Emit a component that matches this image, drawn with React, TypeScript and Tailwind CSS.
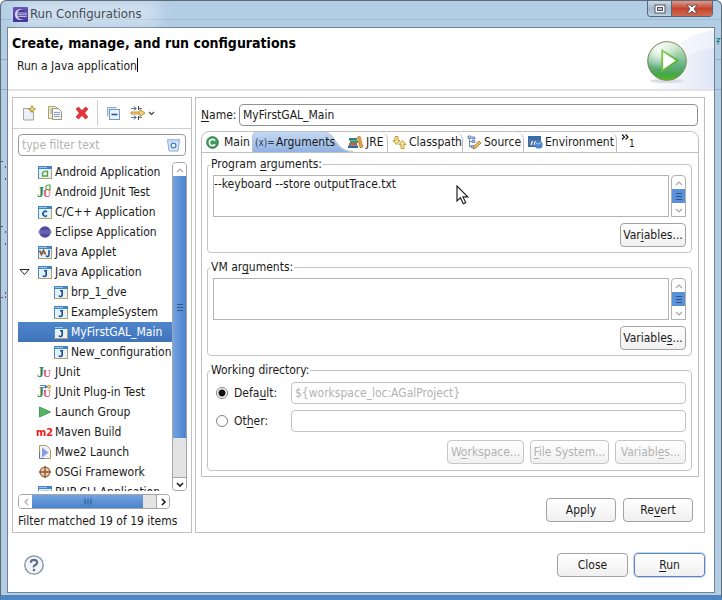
import React from "react";
import { clsx } from "clsx";

const font = "font-['DejaVu_Sans_Condensed','DejaVu_Sans',sans-serif]";

function U({ children }: { children: React.ReactNode }) {
  return <span className="underline underline-offset-2">{children}</span>;
}

/* ---------- icons ---------- */

function EclipseIcon() {
  return (
    <svg width="15" height="15" viewBox="0 0 15 15" aria-hidden="true">
      <defs>
        <linearGradient id="ecl" x1="0" x2="0" y1="0" y2="1">
          <stop offset="0" stopColor="#6a55b5" />
          <stop offset="1" stopColor="#41349a" />
        </linearGradient>
      </defs>
      <rect width="15" height="15" rx="1" fill="url(#ecl)" />
      <circle cx="7.500" cy="7.500" r="5.600" fill="#dcd8ef" />
      <circle cx="9" cy="7.500" r="5" fill="#453b90" />
      <path d="M3 6h11M3 7.800h11M3.600 9.600h10" stroke="#d6d2ef" strokeWidth=".9" />
    </svg>
  );
}

function PlayIcon() {
  return (
    <svg width="42" height="44" viewBox="0 0 42 44" aria-hidden="true">
      <defs>
        <linearGradient id="ball" x1="0" y1="0" x2="0" y2="1">
          <stop offset="0" stopColor="#e8f5e6" />
          <stop offset=".3" stopColor="#a3d3ac" />
          <stop offset=".65" stopColor="#5fae80" />
          <stop offset=".85" stopColor="#47a648" />
          <stop offset="1" stopColor="#4fbf12" />
        </linearGradient>
        <radialGradient id="glow" cx=".3" cy=".22" r=".5">
          <stop offset="0" stopColor="#fff" stopOpacity=".95" />
          <stop offset="1" stopColor="#fff" stopOpacity="0" />
        </radialGradient>
        <linearGradient id="tri" x1="0" y1="0" x2="1" y2="1">
          <stop offset="0" stopColor="#8ccf50" />
          <stop offset="1" stopColor="#4aa82a" />
        </linearGradient>
      </defs>
      <ellipse cx="21" cy="41" rx="17" ry="2" fill="#dcdce6" />
      <circle cx="21" cy="21" r="19.300" fill="url(#ball)" stroke="#7d8a55" strokeWidth="1" />
      <circle cx="21" cy="21" r="18.500" fill="url(#glow)" />
      <path d="M16.200 10.500v20.500L31.500 20.500Z" fill="#fff" stroke="url(#tri)" strokeWidth="1.900" />
    </svg>
  );
}

function NewIcon() {
  return (
    <svg width="16" height="16" viewBox="0 0 16 16" aria-hidden="true">
      <path d="M2.500 3.500h7v3h3v8.500h-10Z" fill="#e9f0fb" stroke="#a3a68c" />
      <path d="M11 .5l1.200 2.500 2.500 1-2.500 1L11 7.500 9.800 5 7.300 4l2.500-1Z" fill="#f3d46c" stroke="#a98a28" strokeWidth=".8" />
    </svg>
  );
}

function CopyIcon() {
  return (
    <svg width="16" height="16" viewBox="0 0 16 16" aria-hidden="true">
      <path d="M1.500 1.500h7l2 2v10h-9Z" fill="#f6efd2" stroke="#b3a160" />
      <path d="M5.500 3.500h6l3 3v8h-9Z" fill="#f2f6fd" stroke="#9d9668" />
      <path d="M7 7.500h6M7 9.500h6M7 11.500h6M3 4h2M3 6h2M3 8h2" stroke="#7f97c4" strokeWidth=".9" />
    </svg>
  );
}

function DeleteIcon() {
  return (
    <svg width="14" height="14" viewBox="0 0 14 14" aria-hidden="true">
      <path d="M1 3l2.500-2L7 4.500 10.500 1 13 3 9.700 7 13 11l-2.500 2L7 9.600 3.500 13 1 11l3.300-4Z" fill="#e5343b" stroke="#c2252c" strokeWidth=".6" />
    </svg>
  );
}

function CollapseIcon() {
  return (
    <svg width="14" height="14" viewBox="0 0 14 14" aria-hidden="true">
      <path d="M1.500 10.500v-9h9" fill="#d9e6f5" stroke="#8fadd0" />
      <rect x="3.500" y="3.500" width="10" height="10" fill="#eaf2fb" stroke="#7399c6" />
      <path d="M5.500 8.500h6" stroke="#1f4f94" strokeWidth="1.400" />
    </svg>
  );
}

function FilterIcon() {
  return (
    <svg width="16" height="16" viewBox="0 0 16 16" aria-hidden="true">
      <path d="M1 3.500h5M9 3.500h3M1 12.500h5M9 12.500h3" stroke="#5d7c94" />
      <path d="M4 1.500l2 2-2 2M4 10.500l2 2-2 2M8.500 1v4M8.500 11v4" fill="none" stroke="#2f4a5e" />
      <path d="M1 7h9V4.500L15 8l-5 3.500V9H1Z" fill="#f6cd7c" stroke="#c08a2c" strokeWidth=".9" />
    </svg>
  );
}

function ClearIcon() {
  return (
    <svg width="13" height="14" viewBox="0 0 13 14" aria-hidden="true">
      <path d="M.5 1.500h12L11 13H2Z" fill="#dbe9f8" stroke="#8aa9cc" />
      <path d="M.5 1.500h12l-.3 2H.8Z" fill="#bcd2ea" />
      <circle cx="6.500" cy="7.500" r="2.400" fill="#fff" stroke="#3f7fd6" strokeWidth="1.300" />
    </svg>
  );
}

function Frame({ children }: { children?: React.ReactNode }) {
  return (
    <svg width="14" height="13" viewBox="0 0 14 13" aria-hidden="true">
      <rect x=".5" y=".5" width="13" height="12" fill="#e6f2fb" stroke="#b3a06a" />
      <path d="M.5 1v11.500" stroke="#4d8ac4" />
      <rect x="0" y="0" width="14" height="3" fill="#3f86c4" />
      <rect x="1" y="1" width="8" height="1" fill="#9cc6ee" />
      {children}
    </svg>
  );
}

function Letter({ x, y, size, fill, children }: { x: number; y: number; size: number; fill: string; children: string }) {
  return (
    <text x={x} y={y} fontSize={size} fontWeight="700" fill={fill} fontFamily="Liberation Serif, serif">{children}</text>
  );
}

function TreeIcon({ kind }: { kind: string }) {
  switch (kind) {
    case "android":
      return (
        <Frame>
          <path d="M4.500 6.500V10h5V4.500M4.500 8c0-2 1-2.800 5-2.800" fill="none" stroke="#5ca03c" strokeWidth="1.300" />
        </Frame>
      );
    case "c":
      return (
        <Frame>
          <path d="M9 6A2.400 2.400 0 1 0 9 9.500" fill="none" stroke="#1d5b9c" strokeWidth="1.700" />
        </Frame>
      );
    case "java":
      return (
        <Frame>
          <path d="M6 4.800h3M8.200 4.500v4q0 2-1.700 2-1.100 0-1.500-1" fill="none" stroke="#1c4d94" strokeWidth="1.600" />
        </Frame>
      );
    case "applet":
      return (
        <Frame>
          <path d="M1.500 4.500l2 4 2-4 2 4" fill="none" stroke="#8a5a2c" strokeWidth="1.700" />
          <path d="M11 4v5q0 1.500-1.300 1.500t-1.500-1" fill="none" stroke="#1c4d94" strokeWidth="1.500" />
        </Frame>
      );
    case "php":
      return (
        <Frame>
          <path d="M3 5.500h8" stroke="#2a5a96" strokeWidth="1.500" />
        </Frame>
      );
    case "eclipse":
      return (
        <svg width="14" height="14" viewBox="0 0 14 14" aria-hidden="true">
          <circle cx="7" cy="7" r="5.800" fill="#55499c" />
          <path d="M.5 6h13M.5 8h13" stroke="#7479c8" strokeWidth="1" />
        </svg>
      );
    case "junit":
    case "junitA":
    case "junitP":
      return (
        <svg width="15" height="16" viewBox="0 0 15 16" aria-hidden="true">
          <Letter x={0} y={13} size={14} fill="#27885a">J</Letter>
          <Letter x={6} y={13} size={11} fill="#dc5361">U</Letter>
          {kind === "junitA" && <path d="M9 5V2.500Q9 .8 13 1v5M9 4v1.500h4" fill="none" stroke="#5ca03c" strokeWidth="1.200" />}
          {kind === "junitP" && (
            <>
              <path d="M3 1.500h5M3 3.500h5" stroke="#5483bd" />
              <path d="M8 .8l3 2-3 2Z" fill="#3d71b5" />
              <circle cx="12" cy="2.800" r="1.700" fill="#f6d478" stroke="#b98b29" strokeWidth=".7" />
            </>
          )}
        </svg>
      );
    case "launch":
      return (
        <svg width="14" height="14" viewBox="0 0 14 14" aria-hidden="true">
          <path d="M1.500 2l11 5L1.500 12Z" fill="#57b368" stroke="#36964b" strokeWidth=".9" />
        </svg>
      );
    case "mwe":
      return (
        <svg width="14" height="14" viewBox="0 0 14 14" aria-hidden="true">
          <path d="M1.500.5h7l4 4v9h-11Z" fill="#eef1fb" stroke="#b69d58" />
          <path d="M1.500 7v6.500h5" fill="none" stroke="#5d76a8" />
          <path d="M4 2.500l6.500 5L4 12.500Z" fill="#8a9de0" />
        </svg>
      );
    case "osgi":
      return (
        <svg width="14" height="14" viewBox="0 0 14 14" aria-hidden="true">
          <circle cx="7" cy="7" r="4.800" fill="#ecd3b8" stroke="#a5704b" strokeWidth="1.400" />
          <path d="M1 7h12M7 1v12" stroke="#875231" strokeWidth="1.300" />
        </svg>
      );
    case "maven":
      return <span className="text-[11px] font-bold leading-none text-[#ee1c1c]">m2</span>;
    default:
      return null;
  }
}

function MainTabIcon() {
  return (
    <svg width="13" height="13" viewBox="0 0 13 13" aria-hidden="true">
      <circle cx="6.500" cy="6.500" r="5.900" fill="#3f9a5b" stroke="#2c7f48" strokeWidth=".8" />
      <path d="M9 4.700A3.100 3.100 0 1 0 9 8.300" fill="none" stroke="#fff" strokeWidth="1.700" />
    </svg>
  );
}

function BooksIcon() {
  return (
    <svg width="15" height="14" viewBox="0 0 15 14" aria-hidden="true">
      <path d="M1 3h8v2.500H1Z" fill="#2b8390" />
      <path d="M2 5.500h8V8H2Z" fill="#3d9a6d" />
      <path d="M1 8h8v2.500H1Z" fill="#d2562e" />
      <path d="M0 10.500h10V13H0Z" fill="#2b6c9c" />
      <path d="M9.500 2l2.500-.8L14.800 12l-2.600 1Z" fill="#e9a43b" stroke="#b36f1d" strokeWidth=".7" />
    </svg>
  );
}

function ClasspathIcon() {
  return (
    <svg width="15" height="15" viewBox="0 0 15 15" aria-hidden="true">
      <path d="M3 1.500h3v4h2L4.500 9.500 1 5.500h2Z" fill="#f9e09a" stroke="#c39a36" />
      <path d="M9 13.500h3v-4h2L10.500 5.500 7 9.500h2Z" fill="#f9e09a" stroke="#c39a36" />
    </svg>
  );
}

function SourceIcon() {
  return (
    <svg width="15" height="15" viewBox="0 0 15 15" aria-hidden="true">
      <path d="M2.500 2v10M2.500 6.500H5M2.500 11.500H5" stroke="#7089b5" fill="none" />
      <path d="M1 1h3v2.500H1ZM5 2h3v2H5ZM5 5.500h3v2H5ZM4 10.500h3v2H4Z" fill="#b9cbea" stroke="#587ab5" strokeWidth=".8" />
      <path d="M6 14l1-3 5-5 2 2-5 5Z" fill="#e9b860" stroke="#a9762b" strokeWidth=".8" />
    </svg>
  );
}

function EnvIcon() {
  return (
    <svg width="15" height="14" viewBox="0 0 15 14" aria-hidden="true">
      <rect x=".5" y="1.500" width="12" height="10" fill="#4e6f96" stroke="#3e6ba5" />
      <rect x="0" y="1" width="13" height="3" fill="#2f6db4" />
      <path d="M3 10l1.500-4M6 10l1.500-4" stroke="#fff" strokeWidth="1.200" />
      <circle cx="10.700" cy="9.700" r="3.900" fill="#4c86cd" />
      <path d="M8 8.500q2.500 1.500 5-1" stroke="#a9cdf2" fill="none" />
    </svg>
  );
}

function Chevron({ dir, dark }: { dir: "up" | "down" | "left" | "right"; dark?: boolean }) {
  const d = { up: "M1 6l3-3 3 3", down: "M1 3l3 3 3-3", left: "M6 1L3 4l3 3", right: "M3 1l3 3-3 3" }[dir];
  return (
    <svg width="8" height="8" viewBox="0 0 8 8" aria-hidden="true">
      <path d={d} fill="none" stroke={dark ? "#222" : "#a9a9a9"} strokeWidth={dark ? 1.7 : 1.2} />
    </svg>
  );
}

function Grip() {
  return (
    <span className="flex flex-col gap-[2px]" aria-hidden="true">
      <span className="h-px w-[6px] bg-[#2f5487]" />
      <span className="h-px w-[6px] bg-[#2f5487]" />
      <span className="h-px w-[6px] bg-[#2f5487]" />
    </span>
  );
}

/* ---------- shared parts ---------- */

function PushButton({ children, width, disabled, primary }: { children: React.ReactNode; width: string; disabled?: boolean; primary?: boolean }) {
  return (
    <button
      type="button"
      disabled={disabled}
      className={clsx(
        "flex h-6 items-center justify-center whitespace-nowrap rounded border bg-gradient-to-b from-white to-[#f0f0f0]",
        width,
        disabled ? "border-[#c6c6c6] text-[#b2b2b2]" : "text-[#1a1a1a]",
        !disabled && (primary ? "border-[#5d86bd] ring-1 ring-[#c6d7ee]" : "border-[#a2a2a2]"),
      )}
    >
      <span>{children}</span>
    </button>
  );
}

function ArgsGroup({ legend, label, value, button }: { legend: React.ReactNode; label: string; value: string; button: React.ReactNode }) {
  return (
    <fieldset className="rounded border border-[#c4c4c4] px-[5px] pb-[5px]">
      <legend className="-ml-[3px] px-px leading-4">{legend}</legend>
      <div className="flex gap-[2px] pt-[3px]">
        <textarea
          aria-label={label}
          defaultValue={value}
          className="h-[42px] min-w-0 flex-1 resize-none overflow-hidden border border-[#b3b3b3] bg-white px-0 py-0 leading-4 outline-none"
        />
        <div className="flex h-[42px] w-[15px] flex-col rounded-t border border-[#b0b0b0]">
          <span className="flex flex-1 items-center justify-center"><Chevron dir="up" /></span>
          <span className="flex h-[14px] items-center justify-center bg-[#5a92d8]"><Grip /></span>
          <span className="flex flex-1 items-center justify-center"><Chevron dir="down" /></span>
        </div>
      </div>
      <div className="mt-[6px] flex justify-end">
        <PushButton width="w-[66px]">{button}</PushButton>
      </div>
    </fieldset>
  );
}

const tree = [
  { label: "Android Application", icon: "android" },
  { label: "Android JUnit Test", icon: "junitA" },
  { label: "C/C++ Application", icon: "c" },
  { label: "Eclipse Application", icon: "eclipse" },
  { label: "Java Applet", icon: "applet" },
  { label: "Java Application", icon: "java", open: true },
  { label: "brp_1_dve", icon: "java", child: true },
  { label: "ExampleSystem", icon: "java", child: true },
  { label: "MyFirstGAL_Main", icon: "java", child: true, selected: true },
  { label: "New_configuration", icon: "java", child: true },
  { label: "JUnit", icon: "junit" },
  { label: "JUnit Plug-in Test", icon: "junitP" },
  { label: "Launch Group", icon: "launch" },
  { label: "Maven Build", icon: "maven" },
  { label: "Mwe2 Launch", icon: "mwe" },
  { label: "OSGi Framework", icon: "osgi" },
  { label: "PHP CLI Application", icon: "php" },
];

function TitleBar() {
  return (
    <header className="relative flex h-[26px] items-center pl-[12px]">
      <div className="absolute left-0 top-[18px] h-px w-full bg-[#9dbbd6]" />
      <div className="absolute left-3 top-0 h-[25px] w-[148px] rounded-full bg-white/40 blur-sm" />
      <span className="relative flex items-center gap-[2px]">
        <EclipseIcon />
        <span className="text-[13px] leading-4 text-[#454b52]">Run Configurations</span>
      </span>
      <div className="absolute right-[8px] top-0 flex h-4 overflow-hidden rounded-b border border-t-0 border-[#55677c]">
        <button type="button" aria-label="Maximize" className="flex w-6 items-center justify-center border-r border-[#55677c] bg-gradient-to-b from-[#cbd9e6] via-[#a3b8cd] to-[#b9cfe2]">
          <svg width="12" height="10" viewBox="0 0 12 10" aria-hidden="true">
            <rect x="1" y="1" width="10" height="8" fill="#fff" stroke="#50545e" />
            <rect x="3.500" y="3.500" width="5" height="3" fill="#b4c6d8" stroke="#50545e" />
          </svg>
        </button>
        <button type="button" aria-label="Close window" className="flex w-10 items-center justify-center bg-gradient-to-b from-[#dd9a8c] via-[#c2432e] to-[#d4694f]">
          <svg width="12" height="10" viewBox="0 0 12 10" aria-hidden="true">
            <path d="M1 1h3l2 2 2-2h3L8 5l3 4H8L6 7 4 9H1l3-4Z" fill="#fff" stroke="#50545e" strokeWidth=".9" />
          </svg>
        </button>
      </div>
    </header>
  );
}

function Banner() {
  return (
    <div className="relative flex h-[63px] justify-between border-b-2 border-[#e4e4e4] bg-white">
      <svg className="absolute right-0 top-0" width="66" height="61" viewBox="0 0 66 61" aria-hidden="true">
        <defs>
          <linearGradient id="sw" x1="0" x2="1">
            <stop offset="0" stopColor="#fff" />
            <stop offset="1" stopColor="#dfe6f6" />
          </linearGradient>
        </defs>
        <path d="M0 61Q20 8 66 2v59Z" fill="url(#sw)" opacity=".6" />
        <path d="M0 61Q34 22 66 20v41Z" fill="url(#sw)" />
      </svg>
      <div className="pl-1">
        <h1 className="pt-[6px] text-[14px] font-bold leading-[18px] text-black">Create, manage, and run configurations</h1>
        <p className="mt-[6px] flex pl-[5px] leading-4">
          Run a Java application<span className="h-[14px] w-px bg-black" />
        </p>
      </div>
      <span className="relative mr-[26px] mt-[12px]"><PlayIcon /></span>
    </div>
  );
}

function Sidebar() {
  return (
    <aside className="flex w-[180px] shrink-0 flex-col border border-[#c0c0c0]">
      <div className="flex h-[31px] items-center border-b border-[#d0d0d0] pl-2">
        <button type="button" aria-label="New launch configuration"><NewIcon /></button>
        <button type="button" aria-label="Duplicate" className="ml-[10px]"><CopyIcon /></button>
        <button type="button" aria-label="Delete" className="ml-3"><DeleteIcon /></button>
        <span className="ml-[8px] h-[26px] w-px bg-[#cfcfcf]" />
        <button type="button" aria-label="Collapse all" className="ml-[8px]"><CollapseIcon /></button>
        <button type="button" aria-label="Filter" className="ml-[10px] flex items-center gap-[2px]">
          <FilterIcon />
          <svg width="7" height="5" viewBox="0 0 7 5" aria-hidden="true"><path d="M1 1l2.500 2.500L6 1" fill="none" stroke="#444" strokeWidth="1.200" /></svg>
        </button>
      </div>
      <div className="flex flex-1 flex-col pl-[5px] pr-[4px]">
        <div className="mr-px mt-[5px] flex h-[22px] items-center rounded border border-[#999] pl-[3px] pr-[5px]">
          <input aria-label="type filter text" placeholder="type filter text" className="min-w-0 flex-1 bg-transparent outline-none placeholder:text-[#b4b4b4]" />
          <button type="button" aria-label="Clear"><ClearIcon /></button>
        </div>
        <div className="mt-[6px] flex h-[329px]">
          <ul role="tree" aria-label="Launch configurations" className="min-w-0 flex-1 overflow-hidden">
            {tree.map((n) => (
              <li
                key={n.label}
                role="treeitem"
                aria-selected={!!n.selected}
                className={clsx(
                  "flex h-5 items-center whitespace-nowrap",
                  n.child && "pl-[35px]",
                  n.selected && "bg-gradient-to-b from-[#4f85cb] to-[#3f74ba] text-white",
                )}
              >
                {!n.child && (
                  <span className="w-[19px] pl-[1px]">
                    {n.open && (
                      <svg width="11" height="8" viewBox="0 0 11 8" aria-hidden="true">
                        <path d="M1 1.500h9L5.500 6.500Z" fill="#fff" stroke="#222" />
                      </svg>
                    )}
                  </span>
                )}
                <span className="flex w-[15px] shrink-0 justify-center"><TreeIcon kind={n.icon} /></span>
                <span className="ml-[3px]">{n.label}</span>
              </li>
            ))}
          </ul>
          <div className="flex w-[15px] shrink-0 flex-col overflow-hidden rounded border border-[#a5a5a5] bg-[#e3e3e3]">
            <span className="flex h-[13px] items-center justify-center bg-white"><Chevron dir="up" /></span>
            <span className="flex h-[262px] items-center justify-center bg-gradient-to-r from-[#72a3e2] to-[#4b83cc]"><Grip /></span>
            <span className="mt-auto flex h-[13px] items-center justify-center border-t border-[#a5a5a5] bg-white"><Chevron dir="down" dark /></span>
          </div>
        </div>
        <div className="mr-[17px] mt-[3px] flex h-[15px] overflow-hidden rounded border border-[#a5a5a5] bg-[#e3e3e3]">
          <span className="flex w-[13px] items-center justify-center bg-white"><Chevron dir="left" /></span>
          <span className="flex w-[111px] items-center justify-center bg-gradient-to-b from-[#72a3e2] to-[#4b83cc]"><span className="rotate-90"><Grip /></span></span>
          <span className="ml-auto flex w-[13px] items-center justify-center border-l border-[#a5a5a5] bg-white"><Chevron dir="right" dark /></span>
        </div>
        <p className="mt-[4px] whitespace-nowrap pb-[3px] leading-4">Filter matched 19 of 19 items</p>
      </div>
    </aside>
  );
}

const tabBase = "flex h-full items-center whitespace-nowrap";
const tabEdge = "rounded-tr-lg border-r border-[#c0c0c0]";

function Tabs() {
  return (
    <div role="tablist" className="flex h-[21px] items-center border-b border-[#c0c0c0]">
      <button type="button" role="tab" aria-selected="false" className={clsx(tabBase, "w-[50px] gap-[5px] pl-[4px]")}><MainTabIcon />Main</button>
      <button type="button" role="tab" aria-selected="true" className={clsx(tabBase, "relative w-[95px] gap-px pl-[3px]")}>
        <svg className="absolute left-0 top-[-1px]" width="102" height="21" viewBox="0 0 102 21" aria-hidden="true">
          <defs>
            <linearGradient id="act" x1="0" y1="0" x2="0" y2="1">
              <stop offset="0" stopColor="#c8daf3" />
              <stop offset="1" stopColor="#8fb2e2" />
            </linearGradient>
          </defs>
          <path d="M.5 21V6Q1 .5 6 .5H70C85 .5 82 21 101 21Z" fill="url(#act)" />
          <path d="M.5 21V6Q1 .5 6 .5H70C85 .5 82 20.500 101 20.500" fill="none" stroke="#b5bfcc" />
        </svg>
        <span className="relative text-[10px] text-[#33445c]">(x)=</span>
        <span className="relative">Arguments</span>
      </button>
      <button type="button" role="tab" aria-selected="false" className={clsx(tabBase, tabEdge, "relative w-[41px] gap-[3px] pl-[1px]")}><BooksIcon />JRE</button>
      <button type="button" role="tab" aria-selected="false" className={clsx(tabBase, tabEdge, "w-[75px] gap-[2px] pl-[4px]")}><ClasspathIcon />Classpath</button>
      <button type="button" role="tab" aria-selected="false" className={clsx(tabBase, tabEdge, "w-[61px] gap-[2px] pl-[4px]")}><SourceIcon />Source</button>
      <button type="button" role="tab" aria-selected="false" className={clsx(tabBase, tabEdge, "w-[93px] gap-[2px] pl-[4px]")}><EnvIcon />Environment</button>
      <button type="button" aria-label="Show 1 more tab" className="ml-[4px] flex h-full">
        <svg className="mt-[2px]" width="8" height="7" viewBox="0 0 8 7" aria-hidden="true"><path d="M1 .5l2.500 2.500L1 5.500M4.500.5L7 3 4.500 5.500" fill="none" stroke="#111" strokeWidth="1.200" /></svg>
        <span className="mt-[6px] text-[10px] leading-3">1</span>
      </button>
    </div>
  );
}

const field = "h-[22px] min-w-0 flex-1 rounded border px-[3px] outline-none";

function Editor() {
  return (
    <main className="flex min-w-0 flex-1 flex-col border border-[#c0c0c0] px-[5px] pt-[6px]">
      <div className="flex items-center">
        <label htmlFor="cfg-name" className="w-[38px]"><U>N</U>ame:</label>
        <input id="cfg-name" defaultValue="MyFirstGAL_Main" className={clsx(field, "mr-px border-[#909090]")} />
      </div>
      <div className="mt-[5px] rounded-t-lg border border-[#c0c0c0] pb-[5px]">
        <Tabs />
        <div className="flex flex-col gap-[6px] pl-[5px] pr-[6px] pt-[3px]">
          <ArgsGroup legend={<>Program <U>a</U>rguments:</>} label="Program arguments" value="--keyboard --store outputTrace.txt" button={<>Var<U>i</U>ables...</>} />
          <ArgsGroup legend={<>VM ar<U>g</U>uments:</>} label="VM arguments" value="" button={<>Variable<U>s</U>...</>} />
          <fieldset className="rounded border border-[#c4c4c4] px-[5px] pb-[6px]">
            <legend className="-ml-[3px] px-px leading-4">Working directory:</legend>
            <div className="flex items-center pt-[4px]">
              <input id="wd-default" type="radio" name="wd" defaultChecked className="ml-[3px] h-3 w-3 appearance-none rounded-full border border-[#808080] bg-white checked:bg-[radial-gradient(circle,#111_0_3px,#fff_4px)]" />
              <label htmlFor="wd-default" className="ml-[6px] w-[57px]">Defa<U>u</U>lt:</label>
              <input aria-label="Default working directory" disabled defaultValue="${workspace_loc:AGalProject}" className={clsx(field, "border-[#c4c4c4] text-[#b2b2b2]")} />
            </div>
            <div className="mt-[6px] flex items-center">
              <input id="wd-other" type="radio" name="wd" className="ml-[3px] h-3 w-3 appearance-none rounded-full border border-[#808080] bg-white checked:bg-[radial-gradient(circle,#111_0_3px,#fff_4px)]" />
              <label htmlFor="wd-other" className="ml-[6px] w-[57px]">Ot<U>h</U>er:</label>
              <input aria-label="Other working directory" disabled className={clsx(field, "border-[#c4c4c4]")} />
            </div>
            <div className="mt-[8px] flex justify-end gap-[6px]">
              <PushButton disabled width="w-[77px]">W<U>o</U>rkspace...</PushButton>
              <PushButton disabled width="w-[79px]"><U>F</U>ile System...</PushButton>
              <PushButton disabled width="w-[71px]">Variabl<U>e</U>s...</PushButton>
            </div>
          </fieldset>
        </div>
      </div>
      <div className="mt-auto flex justify-end gap-[7px] pb-[10px] pr-[6px]">
        <PushButton width="w-[70px]">Apply</PushButton>
        <PushButton width="w-[70px]">Re<U>v</U>ert</PushButton>
      </div>
    </main>
  );
}

/* Faint edges of the window behind, seen through the translucent frame. */
function FrameGlass() {
  return (
    <svg className="absolute left-0 top-[58px] h-[240px] w-[6px]" width="6" height="240" viewBox="0 0 6 240" aria-hidden="true">
      <path d="M0 .5h6M0 30.500h6" stroke="#8fb0cf" />
      <path d="M0 102.500h3M0 167.500h3" stroke="#3f4d66" strokeDasharray="2 1" />
      <path d="M4.500 107v2M4.500 119v2M4.500 172v2M4.500 184v2" stroke="#4a5770" />
      <path d="M0 238.500h2M4.500 233v2M4.500 237v2" stroke="#7b4a8c" />
    </svg>
  );
}

export default function App() {
  return (
    <div className={clsx(font, "relative flex min-h-screen flex-col overflow-hidden rounded-t-md border border-b-[5px] border-[#5d6a78] border-b-[#4f86c2] bg-[#b3cde5] px-[6px] pb-[2px] text-[12px] text-[#1a1a1a]")}>
      <FrameGlass />
      <svg className="absolute right-0 top-[36px]" width="6" height="54" viewBox="0 0 6 54" aria-hidden="true">
        <path d="M1 1.500h4L2 4.500h3M3 4.500v3" fill="none" stroke="#3b8790" strokeWidth="1.200" />
        <path d="M0 22.500h6M0 52.500h6" stroke="#8fb0cf" />
      </svg>
      <div className="-mx-[6px]"><TitleBar /></div>
      <div className="flex flex-1 flex-col border border-[#6f8397] bg-white">
        <Banner />
        <div className="flex gap-[3px] pl-[4px] pr-[9px] pt-[6px]">
          <Sidebar />
          <Editor />
        </div>
        <footer className="mt-auto flex items-center gap-[6px] pb-[15px] pl-[16px] pr-[9px]">
          <button type="button" aria-label="Help" className="mr-auto">
            <svg width="20" height="20" viewBox="0 0 20 20" aria-hidden="true">
              <circle cx="10" cy="10" r="9.200" fill="#f3f5f9" stroke="#8090a6" strokeWidth="1.300" />
              <path d="M6.800 7.800Q6.800 4.800 10 4.800T13.200 7.500Q13.200 9 11.300 10T10 12.300" fill="none" stroke="#5b6f8d" strokeWidth="2.200" />
              <circle cx="10" cy="15" r="1.300" fill="#5b6f8d" />
            </svg>
          </button>
          <PushButton width="w-[71px]">Close</PushButton>
          <PushButton width="w-[71px]" primary><U>R</U>un</PushButton>
        </footer>
      </div>
      <svg className="pointer-events-none absolute left-[455px] top-[184px]" width="14" height="21" viewBox="0 0 14 21" aria-hidden="true">
        <path d="M1 1v15l3.500-3.200 2.700 6 2.500-1.200-2.700-5.700h4.800Z" fill="#fff" stroke="#222" strokeWidth="1.200" />
      </svg>
    </div>
  );
}
